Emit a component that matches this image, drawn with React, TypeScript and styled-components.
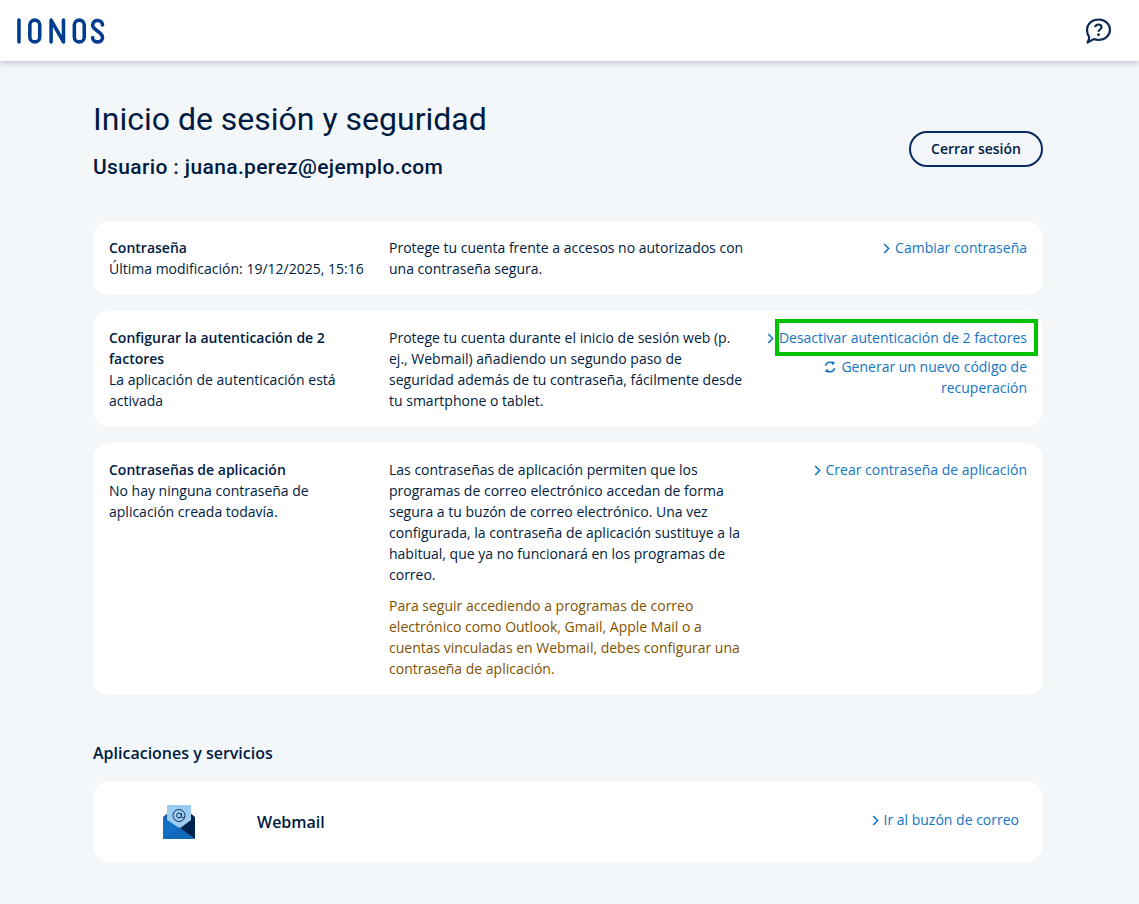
import React from "react";
import styled, { createGlobalStyle } from "styled-components";

const GlobalStyle = createGlobalStyle`
  html, body {
    margin: 0;
    padding: 0;
    background: #f4f7fa;
  }
  body {
    font-family: "Open Sans", "Liberation Sans", sans-serif;
    font-size: 14px;
    line-height: 21px;
    color: #001b41;
  }
`;

const Header = styled.header`
  height: 61px;
  background: #fff;
  box-shadow: 0 2px 6px rgba(113, 126, 157, 0.45);
  display: flex;
  align-items: center;
  justify-content: space-between;
  padding: 0 27px 0 16px;
`;

const Main = styled.main`
  width: 950px;
  margin-left: 93px;
  padding: 39px 0 42px;
`;

const TitleRow = styled.div`
  display: flex;
  justify-content: space-between;
  align-items: center;
  margin-bottom: 40px;
`;

const Title = styled.h1`
  margin: 0 0 15px;
  font-family: Roboto, sans-serif;
  font-size: 32px;
  line-height: 38px;
  font-weight: 400;
`;

const UserLine = styled.div`
  font-family: Roboto, sans-serif;
  font-size: 21px;
  line-height: 28px;
  font-weight: 500;
  letter-spacing: 0.36px;
`;

const OutlineButton = styled.button`
  width: 134px;
  height: 36px;
  border: 2px solid #0b2a63;
  border-radius: 18px;
  background: transparent;
  color: #001b41;
  font-family: inherit;
  font-size: 14px;
  font-weight: 600;
  margin-top: 16px;
`;

const Stack = styled.div`
  display: flex;
  flex-direction: column;
  gap: 16px;
`;

const Card = styled.section`
  display: grid;
  grid-template-columns: 280px 360px 1fr;
  padding: 16px;
  background: #fff;
  border-radius: 16px;
`;

const Name = styled.div`
  font-weight: 600;
`;

const InfoCol = styled.div`
  padding-right: 16px;
`;

const TextCol = styled.div`
  display: flex;
  flex-direction: column;
  gap: 10px;
  width: 360px;
`;

const Para = styled.p<{ $warn?: boolean }>`
  margin: 0;
  color: ${(p) => (p.$warn ? "#7f5200" : "#001b41")};
`;

const ActionCol = styled.div`
  display: flex;
  flex-direction: column;
  align-items: flex-end;
  gap: 8px;
  text-align: right;
`;

const ActionLink = styled.a`
  position: relative;
  color: #1474c4;
  text-decoration: none;
  display: block;
`;

const Highlight = styled.span`
  position: absolute;
  left: 8px;
  right: -11px;
  top: -8px;
  bottom: -8px;
  border: 4px solid #00c300;
  pointer-events: none;
`;

const GlyphSvg = styled.svg`
  display: inline-block;
  vertical-align: -1px;
  margin-right: 5px;
`;

const SectionTitle = styled.h2`
  margin: 46px 0 16px;
  font-size: 16px;
  line-height: 24px;
  font-weight: 600;
`;

const AppCard = styled.section`
  display: flex;
  align-items: center;
  height: 81px;
  padding: 0 24px 0 69px;
  background: #fff;
  border-radius: 16px;
`;

const AppName = styled.div`
  margin: 2px 0 0 61px;
  font-size: 16px;
  font-weight: 600;
`;

const AppLink = styled.div`
  margin-left: auto;
  margin-top: -4px;
`;

const Chevron = () => (
  <GlyphSvg width="7" height="11" viewBox="0 0 7 11">
    <path d="M1.2 1 5.6 5.5 1.2 10" fill="none" stroke="#1474c4" strokeWidth="1.6" />
  </GlyphSvg>
);

const Refresh = () => (
  <GlyphSvg width="12" height="12" viewBox="0 0 12 12">
    <path d="M1.400 4.800A4.700 4.700 0 0 1 8.500 2" fill="none" stroke="#1474c4" strokeWidth="1.600" />
    <path d="M10.600 7.200A4.700 4.700 0 0 1 3.500 10" fill="none" stroke="#1474c4" strokeWidth="1.600" />
    <path d="M7.600 .2 11.200 1.600 8.400 4.400z" fill="#1474c4" />
    <path d="M4.400 11.800 .8 10.400 3.600 7.600z" fill="#1474c4" />
  </GlyphSvg>
);

const Logo = () => (
  <svg width="89" height="26" viewBox="0 0 90 26">
    <g fill="none" stroke="#003d8f" strokeWidth="3.6" strokeLinecap="round">
      <path d="M3 2v22" />
      <rect x="14" y="2" width="10" height="22" rx="5" />
      <path d="M35.500 24V2L48 24V2" strokeLinejoin="round" />
      <rect x="59" y="2" width="10" height="22" rx="5" />
      <path d="M87.500 7c0-6-10-6.500-10 0 0 5.500 10 6.500 10 12.500 0 6-10 6-10 0" />
    </g>
  </svg>
);

const HelpIcon = () => (
  <svg width="28" height="28" viewBox="0 0 28 28">
    <path
      d="M14.500 2.500c6.500 0 11.500 4.600 11.500 10.200 0 5.700-5 10.300-11.500 10.300-1.700 0-3.300-.3-4.700-.9L3.500 25.500c1.300-2 1.900-3.800 1.600-5.700C3.700 18 3 15.500 3 12.700 3 7.100 8 2.500 14.500 2.500z"
      fill="none"
      stroke="#0b2a55"
      strokeWidth="2.200"
      strokeLinejoin="round"
    />
    <path
      d="M11.200 10.200c.2-1.700 1.500-2.700 3.200-2.700 1.800 0 3.100 1.100 3.100 2.600 0 2.400-3 2.400-3 4.700"
      fill="none"
      stroke="#0b2a55"
      strokeWidth="2.200"
    />
    <circle cx="14.500" cy="17.700" r="1.400" fill="#0b2a55" />
  </svg>
);

const MailIcon = () => (
  <svg width="34" height="34" viewBox="0 0 34 34">
    <path d="M1 12 7 7v14z" fill="#0b5cab" />
    <path d="M33 12 27 7v14z" fill="#00234f" />
    <rect x="5" y="0" width="24" height="25" fill="#9ccbf0" />
    <circle cx="17" cy="10.500" r="6" fill="none" stroke="#12315f" strokeWidth="1" />
    <circle cx="17" cy="10.500" r="2.400" fill="none" stroke="#12315f" strokeWidth="1" />
    <path d="M19.400 8v3.500c0 1.600 2.400 1.500 3.300.3" fill="none" stroke="#12315f" strokeWidth="1" />
    <path d="M1 12 20 25 1 34z" fill="#1270c4" />
    <path d="M33 12 17 24 33 34z" fill="#00234f" />
    <path d="M1 34 17 22 33 34z" fill="#0f68b8" />
  </svg>
);

export default function App() {
  return (
    <>
      <GlobalStyle />
      <Header>
        <Logo />
        <HelpIcon />
      </Header>
      <Main>
        <TitleRow>
          <div>
            <Title>Inicio de sesión y seguridad</Title>
            <UserLine>Usuario : juana.perez@ejemplo.com</UserLine>
          </div>
          <OutlineButton>Cerrar sesión</OutlineButton>
        </TitleRow>
        <Stack>
          <Card>
            <InfoCol>
              <Name>Contraseña</Name>
              Última modificación: 19/12/2025, 15:16
            </InfoCol>
            <TextCol>
              <Para>Protege tu cuenta frente a accesos no autorizados con una contraseña segura.</Para>
            </TextCol>
            <ActionCol>
              <ActionLink>
                <Chevron />
                Cambiar contraseña
              </ActionLink>
            </ActionCol>
          </Card>
          <Card>
            <InfoCol>
              <Name>Configurar la autenticación de 2 factores</Name>
              La aplicación de autenticación está activada
            </InfoCol>
            <TextCol>
              <Para>
                Protege tu cuenta durante el inicio de sesión web (p. ej., Webmail) añadiendo un segundo paso de
                seguridad además de tu contraseña, fácilmente desde tu smartphone o tablet.
              </Para>
            </TextCol>
            <ActionCol>
              <ActionLink>
                <Chevron />
                Desactivar autenticación de 2 factores
                <Highlight />
              </ActionLink>
              <ActionLink>
                <Refresh />
                Generar un nuevo código de recuperación
              </ActionLink>
            </ActionCol>
          </Card>
          <Card>
            <InfoCol>
              <Name>Contraseñas de aplicación</Name>
              No hay ninguna contraseña de aplicación creada todavía.
            </InfoCol>
            <TextCol>
              <Para>
                Las contraseñas de aplicación permiten que los programas de correo electrónico accedan de forma segura
                a tu buzón de correo electrónico. Una vez
                <br />
                configurada, la contraseña de aplicación sustituye a la habitual, que ya no funcionará en los programas
                de correo.
              </Para>
              <Para $warn>
                Para seguir accediendo a programas de correo electrónico como Outlook, Gmail, Apple Mail o a cuentas
                vinculadas en Webmail, debes configurar una contraseña de aplicación.
              </Para>
            </TextCol>
            <ActionCol>
              <ActionLink>
                <Chevron />
                Crear contraseña de aplicación
              </ActionLink>
            </ActionCol>
          </Card>
        </Stack>
        <SectionTitle>Aplicaciones y servicios</SectionTitle>
        <AppCard>
          <MailIcon />
          <AppName>Webmail</AppName>
          <AppLink>
            <ActionLink>
              <Chevron />
              Ir al buzón de correo
            </ActionLink>
          </AppLink>
        </AppCard>
      </Main>
    </>
  );
}
